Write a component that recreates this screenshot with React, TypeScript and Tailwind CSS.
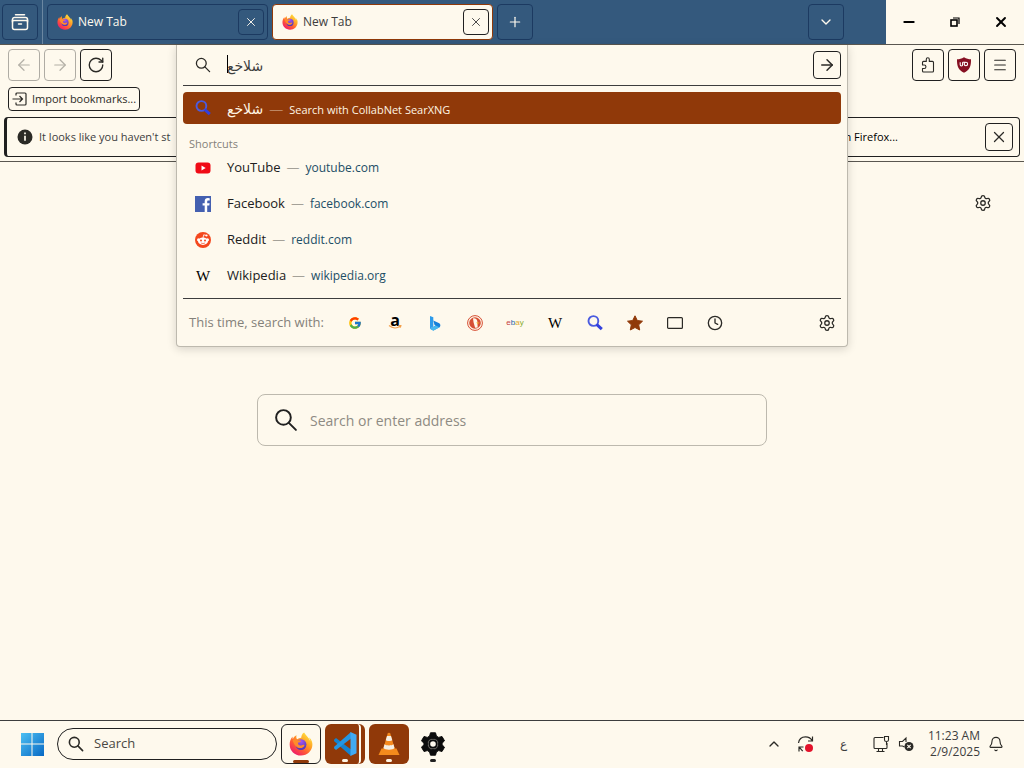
import type { ReactNode } from "react";
import { clsx } from "clsx";
import {
  ArrowLeft,
  ArrowRight,
  Bell,
  ChevronDown,
  ChevronUp,
  Clock,
  Menu,
  Minus,
  Plus,
  RotateCw,
  Settings,
  X,
} from "lucide-react";
import { FcGoogle } from "react-icons/fc";

const iconButtonClass =
  "flex shrink-0 items-center justify-center rounded border border-[#202020] text-[#2b2a26]";
const stripButtonClass =
  "flex size-9 shrink-0 items-center justify-center rounded border border-[#1c3a61] text-[#fffaef]";

function FirefoxIcon({ className, id }: { className: string; id: string }) {
  return (
    <svg viewBox="0 0 32 32" className={className} aria-hidden="true">
      <defs>
        <linearGradient id={`${id}-flame`} x1="0.85" y1="0.1" x2="0.2" y2="0.95">
          <stop offset="0" stopColor="#ffe23e" />
          <stop offset="0.35" stopColor="#ffa126" />
          <stop offset="0.65" stopColor="#ff5a35" />
          <stop offset="1" stopColor="#ef1b6c" />
        </linearGradient>
        <radialGradient id={`${id}-globe`} cx="0.5" cy="0.2" r="0.8">
          <stop offset="0" stopColor="#a455f2" />
          <stop offset="1" stopColor="#4d36b3" />
        </radialGradient>
      </defs>
      <path
        d="M30.4 12.2c-.8-2-2.4-4.1-3.6-4.8.9 1.8 1.5 3.6 1.700 5C26.400 7.300 22.900 5.200 20.100.700 17.300 2.400 16.400 5.500 16.300 7.600c-2 .1-3.900.9-5.400 2.100C9.600 8.700 9.500 6.300 10.100 4.400 7.200 5.700 5.800 8 5.200 9.300c-.5-.7-.5-2.800-.4-3.400C2.100 8.800.900 12.800.900 16.500.900 25 7.600 31.300 16 31.300s15-6.200 15.200-14.400c.1-1.700-.2-3.300-.8-4.700z"
        fill={`url(#${id}-flame)`}
      />
      <circle cx="16" cy="16.800" r="7.200" fill={`url(#${id}-globe)`} />
      <path
        d="M5 10.500c2.500-1.500 5.500-1 7 .7 1.200-.3 3.200-.2 4.200.8-1 1.800-3.200 1.700-4.200 2.400-.2 2.500 1.600 4 4.200 3.600 2.200-.4 3-1.600 4.500-.7-.8 3.400-4 4.600-7.100 4-4.500-.8-7.600-5.800-8.600-10.800z"
        fill="#ff8b2b"
      />
    </svg>
  );
}

function SearchIcon({ className, strokeWidth }: { className: string; strokeWidth: number }) {
  return (
    <svg
      viewBox="0 0 16 16"
      className={className}
      fill="none"
      stroke="currentColor"
      strokeWidth={strokeWidth}
      strokeLinecap="round"
      aria-hidden="true"
    >
      <circle cx="6.300" cy="6.300" r="4.900" />
      <path d="m9.900 9.900 4.700 4.700" />
    </svg>
  );
}

function MagnifierIcon({ className }: { className: string }) {
  return (
    <svg viewBox="0 0 16 16" className={className} fill="none" aria-hidden="true">
      <circle cx="6.400" cy="6" r="4.900" stroke="#4a5be0" strokeWidth="1.900" />
      <path d="M9.600 9.400 14.800 14.200" stroke="#3340dd" strokeWidth="3" />
    </svg>
  );
}

function GearIcon({ className }: { className: string }) {
  return (
    <svg viewBox="0 0 24 24" className={className} aria-hidden="true">
      <path
        fillRule="evenodd"
        fill="#0c0c0c"
        stroke="#0c0c0c"
        strokeLinejoin="round"
        d="M9.500.800h5l.9 3.300 2.300 1.300 3.300-.9 2.500 4.300-2.400 2.400v1.600l2.400 2.400-2.500 4.300-3.300-.9-2.300 1.300-.9 3.300h-5l-.9-3.300-2.300-1.300-3.300.9L.500 15.200l2.400-2.400v-1.600L.500 8.800 3 4.500l3.300.9 2.300-1.300zM12 6.500a5.500 5.500 0 1 0 0 11 5.500 5.500 0 0 0 0-11z"
      />
      <circle cx="12" cy="12" r="3.800" fill="none" stroke="#0c0c0c" strokeWidth="2" />
    </svg>
  );
}

function YouTubeIcon() {
  return (
    <svg viewBox="0 0 16 16" className="size-4" aria-hidden="true">
      <rect x="0.500" y="2.500" width="15" height="11" rx="3" fill="#f00b16" />
      <path d="m6.500 5.600 4.200 2.400-4.200 2.400z" fill="#fff" />
    </svg>
  );
}

function FacebookIcon() {
  return (
    <svg viewBox="0 0 16 16" className="size-4" aria-hidden="true">
      <path d="M0 0h16v16H0z" fill="#4460b0" />
      <path d="M9.700 16V9.600H7.600V7.200h2.100V5.300c0-2.100 1.300-3.200 3.200-3.200l1.800.1v2.200h-1.200c-1 0-1.300.5-1.300 1.200v1.600h2.400l-.3 2.400h-2.100V16z" fill="#fff" />
    </svg>
  );
}

function RedditIcon() {
  return (
    <svg viewBox="0 0 16 16" className="size-4" aria-hidden="true">
      <circle cx="8" cy="8" r="8" fill="#f4481e" />
      <path d="m8 6 .7-3.200 2.500.6" stroke="#fff" strokeWidth=".8" fill="none" />
      <g fill="#fff">
        <circle cx="11.500" cy="3.500" r="1.100" />
        <circle cx="3.500" cy="7.800" r="1.500" />
        <circle cx="12.500" cy="7.800" r="1.500" />
        <ellipse cx="8" cy="9.200" rx="4.900" ry="3.700" />
      </g>
      <circle cx="6" cy="8.400" r="1" fill="#f4481e" />
      <circle cx="10" cy="8.400" r="1" fill="#f4481e" />
      <path d="M5.900 10.900c1.200.8 3 .8 4.200 0" stroke="#f4481e" strokeWidth=".7" fill="none" />
    </svg>
  );
}

function WikipediaIcon() {
  return (
    <span className="flex size-4 items-center justify-center font-['Liberation_Serif',serif] text-[15px] leading-4 text-black">
      W
    </span>
  );
}

function AmazonIcon() {
  return (
    <span className="flex size-4 flex-col items-center">
      <span className="text-[16px] leading-[10px] font-bold text-black">a</span>
      <svg viewBox="0 0 14 4" className="h-1 w-3.5" fill="none" aria-hidden="true">
        <path d="M1 .5c3.500 3 8 3 11 .8M10.500.4l2.400.1-.6 2.200" stroke="#f2a04c" strokeWidth="1.200" />
      </svg>
    </span>
  );
}

function BingIcon() {
  return (
    <svg viewBox="0 0 16 16" className="size-4" aria-hidden="true">
      <path d="m3 1 3.300 1.200v9.300L3 13.700z" fill="#2d9bea" />
      <path d="m6.300 5.500 6 2.800c1.500 1 1.300 3 .3 4L6.300 15.500 3 13.700l5.600-3.200-1.100-.6z" fill="#1680da" />
      <path d="m3 13.700 5.600-3.200 3.900 1.800-6.200 3.500z" fill="#49b9ee" />
    </svg>
  );
}

function DuckIcon() {
  return (
    <svg viewBox="0 0 16 16" className="size-4" aria-hidden="true">
      <circle cx="8" cy="8" r="7.400" fill="#fff7e8" stroke="#d64f34" strokeWidth="1" />
      <circle cx="8" cy="8" r="5.800" fill="#d64f34" />
      <path d="M6 3.500c2-.5 3.800.4 4.200 2.300l.3 1.700v2l.2 3-2.600.3L6.600 7.500z" fill="#fff7e8" />
      <path d="m9.300 7.300 3.400.4-2.400 1.400z" fill="#f2b52d" />
    </svg>
  );
}

function EbayIcon() {
  return (
    <span className="font-['Liberation_Sans',sans-serif] text-[8px] leading-4">
      <span className="text-[#c4423f]">e</span>
      <span className="text-[#2563a8]">b</span>
      <span className="text-[#e2a92b]">a</span>
      <span className="text-[#86ad2c]">y</span>
    </span>
  );
}

function StarIcon() {
  return (
    <svg viewBox="0 0 16 16" className="size-4" aria-hidden="true">
      <path
        d="m8 .8 2.300 4.700 5.200.7-3.800 3.600 1 5.200L8 12.500 3.300 15l1-5.200L.5 6.200l5.200-.7z"
        fill="#903909"
        stroke="#903909"
        strokeLinejoin="round"
      />
    </svg>
  );
}

function TabIcon() {
  return (
    <svg viewBox="0 0 16 16" className="size-4" fill="none" aria-hidden="true">
      <rect x="0.600" y="2.600" width="14.800" height="10.800" rx="1" stroke="#2b2a26" strokeWidth="1.200" />
    </svg>
  );
}

function PrefsIcon({ className }: { className: string }) {
  return <Settings className={className} strokeWidth={1.7} aria-hidden="true" />;
}

function PuzzleIcon() {
  return (
    <svg viewBox="0 0 16 16" className="size-4" fill="none" stroke="#2b2a26" strokeLinejoin="round" aria-hidden="true">
      <path
        d="M2.500 8V5.400a1 1 0 0 1 1-1h2.800V2.300a1.500 1.500 0 0 1 3 0v2.100h3.200a1 1 0 0 1 1 1v8.600a1 1 0 0 1-1 1h-9a1 1 0 0 1-1-1v-2.500h1.700a1.700 1.700 0 0 0 0-3.500z"
        strokeWidth="1.100"
      />
    </svg>
  );
}

function ShieldIcon() {
  return (
    <svg viewBox="0 0 16 16" className="size-4" aria-hidden="true">
      <path d="M8 .3c2.500 1.500 4.500 2 7 2C15.200 9.500 13.500 13 8 15.800 2.500 13 .8 9.500 1 2.300c2.500 0 4.500-.5 7-2z" fill="#860f22" />
      <path d="M4.200 5.300v2.500c0 1.600 2.400 1.600 2.400 0V5.300M6.700 5.300h2.600" stroke="#fff" strokeWidth="1.100" fill="none" />
      <circle cx="9.900" cy="7" r="1.700" stroke="#fff" strokeWidth="1.100" fill="none" />
    </svg>
  );
}

function FirefoxViewIcon() {
  return (
    <svg viewBox="0 0 18 18" className="size-[18px]" fill="none" stroke="#fffaef" strokeWidth="1.500" aria-hidden="true">
      <path d="M4.500 1.700h9M1.500 9V6.500a2 2 0 0 1 2-2h11a2 2 0 0 1 2 2V9" strokeLinecap="round" />
      <path d="M1.500 7.500h15v7a2 2 0 0 1-2 2h-11a2 2 0 0 1-2-2z" />
      <path d="M7.500 11h3" strokeLinecap="round" />
    </svg>
  );
}

function ImportIcon() {
  return (
    <svg viewBox="0 0 16 16" className="size-4" fill="none" stroke="#2b2a26" strokeWidth="1.200" aria-hidden="true">
      <path d="M4 4.500V3a1 1 0 0 1 1-1h8a1 1 0 0 1 1 1v10a1 1 0 0 1-1 1H5a1 1 0 0 1-1-1v-1.500M.5 8h9.700M7.500 5l3 3-3 3" />
    </svg>
  );
}

function InfoIcon() {
  return (
    <svg viewBox="0 0 16 16" className="size-4 shrink-0" aria-hidden="true">
      <circle cx="8" cy="8" r="7.500" fill="#2b2a26" />
      <path d="M8 3.600v1.700M8 6.800v5" stroke="#fffaef" strokeWidth="1.700" />
    </svg>
  );
}

function RestoreIcon() {
  return (
    <svg viewBox="0 0 10 10" className="size-2.5" fill="none" stroke="#000" aria-hidden="true">
      <rect x="1" y="3" width="6" height="6" strokeWidth="1.600" />
      <path d="M3 1h6v6" strokeWidth="1.200" />
    </svg>
  );
}

function StartIcon() {
  return (
    <svg viewBox="0 0 24 24" className="size-6" aria-hidden="true">
      <defs>
        <linearGradient id="start" x1="0" y1="0" x2="24" y2="24" gradientUnits="userSpaceOnUse">
          <stop stopColor="#50c4f5" />
          <stop offset="1" stopColor="#0768c4" />
        </linearGradient>
      </defs>
      <path d="M1 1h10.500v10.500H1zM12.500 1H24v10.500H12.500zM1 12.500h10.500V24H1zM12.500 12.500H24V24H12.500z" fill="url(#start)" />
    </svg>
  );
}

function CodeIcon() {
  return (
    <svg viewBox="0 0 24 24" className="size-6" aria-hidden="true">
      <path d="M1 7.800 3 6l15 11.500V24L1.200 9.200z" fill="#1482cf" />
      <path d="m1 16.200 2 1.800L18 6.500V0L1.200 14.800z" fill="#2496e3" />
      <path d="m17.500 0 6 2.800v18.400l-6 2.800z" fill="#42aaf2" />
    </svg>
  );
}

function ConeIcon() {
  return (
    <svg viewBox="0 0 24 24" className="size-6" aria-hidden="true">
      <path d="M4.500 16.500h15l3 6.500h-21z" fill="#f48b1c" />
      <path d="M10.700 1.500c.3-1 2.300-1 2.600 0L18 17.500c-1.500 2.800-10.500 2.800-12 0z" fill="#f58a1f" />
      <path d="m10 4-1.300 4.200c1 1 5.600 1 6.600 0L14 4zM7.500 12.200l-1 3.800c1.500 2.200 9.500 2.200 11 0l-1-3.800c-1.800 1.600-7.200 1.600-9 0z" fill="#f4eee4" />
    </svg>
  );
}

function SyncIcon() {
  return (
    <svg viewBox="0 0 18 18" className="size-[18px]" fill="none" stroke="#2b2a26" strokeWidth="1.200" aria-hidden="true">
      <path d="M1.500 8C2 4 5 1.800 8.500 1.800c3.200 0 5.500 1.500 6.800 4M15.500 1.500v4.500H11M6.500 12H2v4.500M2.200 12.200l3.500 4" />
      <circle cx="12" cy="13" r="4" fill="#e3122b" stroke="none" />
    </svg>
  );
}

function MonitorIcon() {
  return (
    <svg viewBox="0 0 18 18" className="size-[18px]" fill="none" stroke="#2b2a26" strokeWidth="1.100" aria-hidden="true">
      <path d="M11.500 2.500H3a1 1 0 0 0-1 1v9a1 1 0 0 0 1 1h11a1 1 0 0 0 1-1V8M4.500 16.500h8M6.500 13.500v3M10.500 13.500v3M12.500 1.500h4V5c0 2-4 2-4 0zM14.500 7v3" />
    </svg>
  );
}

function MutedIcon() {
  return (
    <svg viewBox="0 0 16 16" className="size-4" fill="none" stroke="#2b2a26" strokeWidth="1.100" aria-hidden="true">
      <path d="M6.500 11 4.500 10H1.500V5.500h3L8 2v4" />
      <circle cx="11" cy="10.500" r="4.500" fill="#2b2a26" stroke="none" />
      <path d="m9.300 8.800 3.400 3.400M12.700 8.800l-3.400 3.400" stroke="#fffaef" />
    </svg>
  );
}

const shortcuts = [
  { title: "YouTube", url: "youtube.com", icon: <YouTubeIcon /> },
  { title: "Facebook", url: "facebook.com", icon: <FacebookIcon /> },
  { title: "Reddit", url: "reddit.com", icon: <RedditIcon /> },
  { title: "Wikipedia", url: "wikipedia.org", icon: <WikipediaIcon /> },
];

const engines = [
  { name: "Google", icon: <FcGoogle className="size-3.5" /> },
  { name: "Amazon", icon: <AmazonIcon /> },
  { name: "Bing", icon: <BingIcon /> },
  { name: "DuckDuckGo", icon: <DuckIcon /> },
  { name: "eBay", icon: <EbayIcon /> },
  { name: "Wikipedia", icon: <WikipediaIcon /> },
  { name: "SearXNG", icon: <MagnifierIcon className="size-4" /> },
  { name: "Bookmarks", icon: <StarIcon /> },
  { name: "Tabs", icon: <TabIcon /> },
  { name: "History", icon: <Clock className="size-4 text-[#2b2a26]" strokeWidth={2} /> },
];

function BrowserTab({ id, active }: { id: string; active?: boolean }) {
  return (
    <div
      className={clsx(
        "flex h-9 max-w-[221px] flex-1 items-center gap-[5px] rounded border pr-[3px] pl-[9px]",
        active ? "border-[#903909] bg-[#fef9ed] text-[#3d3d3d]" : "border-[#1c3a61] text-[#fffaef]",
      )}
    >
      <FirefoxIcon className="size-4" id={id} />
      <span className="flex-1">New Tab</span>
      <button
        type="button"
        aria-label="Close tab"
        className={clsx(
          "flex size-[26px] items-center justify-center rounded border",
          active ? "border-[#202020]" : "border-[#1c3a61]",
        )}
      >
        <X className="size-3.5" strokeWidth={1.6} />
      </button>
    </div>
  );
}

function TitleBar() {
  return (
    <header className="flex h-[45px] border-b border-[#5a5750]">
      <div className="flex flex-1 items-center bg-[#34597d] pr-[42px] pl-0.5">
        <button type="button" aria-label="Firefox View" className={stripButtonClass}>
          <FirefoxViewIcon />
        </button>
        <div className="mr-1 ml-1 h-full w-px bg-[#6b87a1]" />
        <div className="flex flex-1 gap-1">
          <BrowserTab id="tab-one" />
          <BrowserTab id="tab-two" active />
          <button type="button" aria-label="New tab" className={stripButtonClass}>
            <Plus className="size-4" strokeWidth={1.8} />
          </button>
        </div>
        <button type="button" aria-label="List all tabs" className={stripButtonClass}>
          <ChevronDown className="size-4" strokeWidth={2} />
        </button>
      </div>
      <div className="flex text-black">
        <button type="button" aria-label="Minimize" className="flex w-[46px] items-center justify-center">
          <Minus className="size-4" strokeWidth={3} />
        </button>
        <button type="button" aria-label="Restore" className="flex w-[46px] items-center justify-center">
          <RestoreIcon />
        </button>
        <button type="button" aria-label="Close" className="flex w-[46px] items-center justify-center">
          <X className="size-4" strokeWidth={2.8} />
        </button>
      </div>
    </header>
  );
}

function UrlPopup() {
  return (
    <section className="absolute inset-x-[176px] top-0 z-10 rounded-b border border-t-0 border-[#bdb9ae] bg-[#fef9ed] px-1.5 shadow-[0_2px_10px_rgba(0,0,0,0.16)]">
      <div className="flex h-[41px] items-center border-b border-[#3d3d3d] pl-3">
        <SearchIcon className="size-4 shrink-0 text-[#2b2a26]" strokeWidth={1.3} />
        <div className="relative ml-4 flex-1">
          <input
            aria-label="Search or enter address"
            defaultValue="شلاخع"
            dir="ltr"
            className="w-full bg-transparent text-[14px] outline-none"
          />
          <span className="absolute top-0 left-0 h-[18px] w-px bg-black" />
        </div>
        <button type="button" aria-label="Go" className={clsx(iconButtonClass, "size-7")}>
          <ArrowRight className="size-[18px]" strokeWidth={2} />
        </button>
      </div>

      <a href="#search" className="mt-1.5 flex h-8 items-center rounded bg-[#903909] pl-3 text-[#fff5e3]">
        <MagnifierIcon className="size-4" />
        <span className="ml-4 flex items-baseline">
          <span className="text-[14px]">شلاخع</span>
          <span className="mx-1.5 text-[14px] font-light opacity-70">—</span>
          <span className="text-[11px]">Search with CollabNet SearXNG</span>
        </span>
      </a>

      <h2 className="mt-3.5 pl-1.5 text-[11px] leading-3 text-[#84817a]">Shortcuts</h2>
      <ul>
        {shortcuts.map((item) => (
          <li key={item.title}>
            <a href={`#${item.title}`} className="flex h-9 items-center pl-3">
              {item.icon}
              <span className="ml-4 flex items-baseline">
                <span className="text-[13px] text-[#202020]">{item.title}</span>
                <span className="mx-1.5 text-[13px] font-light text-[#5f5d57]">—</span>
                <span className="text-[#1c4e66]">{item.url}</span>
              </span>
            </a>
          </li>
        ))}
      </ul>

      <div className="mt-1 flex h-12 items-center border-t border-[#3d3d3d] pl-1.5">
        <span className="w-[146px] shrink-0 text-[13px] whitespace-nowrap text-[#84817a]">
          This time, search with:
        </span>
        <div className="flex flex-1">
          {engines.map((engine) => (
            <button
              key={engine.name}
              type="button"
              aria-label={engine.name}
              className="flex h-8 w-10 items-center justify-center"
            >
              {engine.icon}
            </button>
          ))}
        </div>
        <button type="button" aria-label="Search settings" className="flex w-7 justify-center text-[#2b2a26]">
          <PrefsIcon className="size-[18px]" />
        </button>
      </div>
    </section>
  );
}

function Toolbars() {
  return (
    <div className="relative border-b border-[#5a5750] pb-1">
      <UrlPopup />
      <nav className="flex gap-1 px-2 pt-1">
        <button type="button" aria-label="Back" disabled className={clsx(iconButtonClass, "size-8 opacity-35")}>
          <ArrowLeft className="size-[18px]" strokeWidth={1.6} />
        </button>
        <button type="button" aria-label="Forward" disabled className={clsx(iconButtonClass, "size-8 opacity-35")}>
          <ArrowRight className="size-[18px]" strokeWidth={1.6} />
        </button>
        <button type="button" aria-label="Reload" className={clsx(iconButtonClass, "size-8")}>
          <RotateCw className="size-[18px]" strokeWidth={1.8} />
        </button>
        <div className="flex-1" />
        <button type="button" aria-label="Extensions" className={clsx(iconButtonClass, "size-8")}>
          <PuzzleIcon />
        </button>
        <button type="button" aria-label="uBlock Origin" className={clsx(iconButtonClass, "size-8")}>
          <ShieldIcon />
        </button>
        <button type="button" aria-label="Open menu" className={clsx(iconButtonClass, "size-8")}>
          <Menu className="size-4" strokeWidth={1.6} />
        </button>
      </nav>

      <div className="px-2 pt-1.5">
        <button type="button" className={clsx(iconButtonClass, "h-6 gap-1 px-[3px] text-[11px]")}>
          <ImportIcon />
          Import bookmarks...
        </button>
      </div>

      <div className="mx-1 mt-1.5 flex h-10 items-center rounded border border-l-[3px] border-[#202020] pr-1.5 pl-2.5">
        <InfoIcon />
        <p className="ml-1.5 text-[11px] whitespace-nowrap">It looks like you haven't st</p>
        <div className="flex-1" />
        <button type="button" className="mr-[87px] text-[11px] text-black">
          Refresh Firefox...
        </button>
        <button type="button" aria-label="Dismiss" className={clsx(iconButtonClass, "size-7")}>
          <X className="size-[18px]" strokeWidth={1.7} />
        </button>
      </div>
    </div>
  );
}

function TaskTile({ label, className, children }: { label: string; className: string; children: ReactNode }) {
  return (
    <button
      type="button"
      aria-label={label}
      className={clsx("relative flex size-10 items-center justify-center rounded-md", className)}
    >
      {children}
    </button>
  );
}

function Taskbar() {
  return (
    <footer className="flex h-12 items-center border-t border-[#3d3d3d] px-5 pb-0.5">
      <button type="button" aria-label="Start">
        <StartIcon />
      </button>
      <label className="ml-[13px] flex h-8 w-[220px] items-center gap-2.5 rounded-full border border-[#202020] px-2.5">
        <SearchIcon className="size-4 shrink-0 text-[#2b2a26]" strokeWidth={1.6} />
        <input
          aria-label="Search"
          placeholder="Search"
          className="w-full bg-transparent text-[13px] outline-none placeholder:text-[#4a4843]"
        />
      </label>
      <div className="ml-1 flex gap-1">
        <TaskTile label="Firefox" className="border border-[#202020]">
          <FirefoxIcon className="size-6" id="task" />
          <span className="absolute bottom-0 h-[3px] w-4 rounded-full bg-[#903909]" />
        </TaskTile>
        <TaskTile label="Visual Studio Code" className="bg-[#903909]">
          <span className="absolute inset-y-0 right-1 w-1.5 rounded-r border-r-2 border-[#fef9ed]" />
          <CodeIcon />
          <span className="absolute bottom-0.5 h-[3px] w-1.5 rounded-full bg-[#fff5e3]" />
        </TaskTile>
        <TaskTile label="VLC media player" className="bg-[#903909]">
          <ConeIcon />
          <span className="absolute bottom-0.5 h-[3px] w-1.5 rounded-full bg-[#fff5e3]" />
        </TaskTile>
        <TaskTile label="Settings" className="">
          <GearIcon className="size-6" />
          <span className="absolute bottom-0.5 h-[3px] w-1.5 rounded-full bg-[#202020]" />
        </TaskTile>
      </div>
      <div className="flex-1" />
      <button type="button" aria-label="Show hidden icons" className="text-[#2b2a26]">
        <ChevronUp className="size-4" strokeWidth={2} />
      </button>
      <div className="ml-[15px]">
        <SyncIcon />
      </div>
      <span className="ml-[25px] w-2 text-[12px]">ع</span>
      <div className="ml-6">
        <MonitorIcon />
      </div>
      <div className="ml-2">
        <MutedIcon />
      </div>
      <div className="ml-3.5 text-right leading-4">
        <div>11:23 AM</div>
        <div>2/9/2025</div>
      </div>
      <button type="button" aria-label="Notifications" className="ml-2 text-[#2b2a26]">
        <Bell className="size-4" strokeWidth={1.7} />
      </button>
    </footer>
  );
}

export default function App() {
  return (
    <div className="flex min-h-screen flex-col bg-[#fef9ed] font-['Open_Sans','Noto_Sans','DejaVu_Sans',sans-serif] text-[12px] text-[#3d3d3d]">
      <TitleBar />
      <Toolbars />
      <main className="flex flex-1 flex-col px-8 pt-8">
        <button type="button" aria-label="Personalize new tab" className="self-end text-[#2b2a26]">
          <PrefsIcon className="size-[18px]" />
        </button>
        <label className="mx-auto mt-[182px] flex h-[52px] w-full max-w-[510px] items-center gap-3 rounded-lg border border-[#bdb9ae] px-4">
          <SearchIcon className="size-6 shrink-0 text-[#202020]" strokeWidth={1.3} />
          <input
            aria-label="Search or enter address"
            placeholder="Search or enter address"
            className="w-full bg-transparent text-[14px] outline-none placeholder:text-[#8e8b83]"
          />
        </label>
      </main>
      <Taskbar />
    </div>
  );
}
